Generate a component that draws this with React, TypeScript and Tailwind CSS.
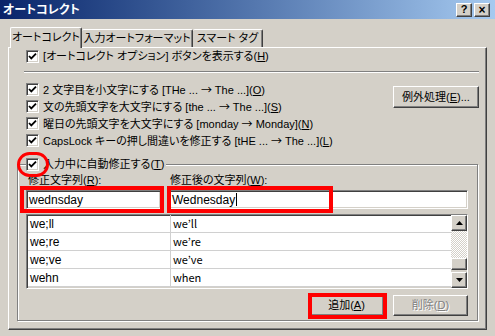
import type { ReactNode } from "react";

function Check() {
  return (
    <span className="flex h-[13px] w-[13px] shrink-0 items-center justify-center border border-t-[#808080] border-l-[#808080] border-r-white border-b-white bg-white shadow-[inset_1px_1px_0_#404040,inset_-1px_-1px_0_#d4d0c8]">
      <svg width="9" height="9" viewBox="0 0 9 9" aria-hidden="true">
        <path d="M1 4 L3.3 6.4 L8 1.6" fill="none" stroke="#000" strokeWidth="1.8" />
      </svg>
    </span>
  );
}

function Key({ k }: { k: string }) {
  return (
    <>
      (<u className="underline-offset-1">{k}</u>)
    </>
  );
}

function Arr() {
  return <span className="font-['Noto_Sans_CJK_JP',sans-serif] [font-feature-settings:normal]">→</span>;
}

function CheckRow({ children }: { children: ReactNode }) {
  return (
    <div className="flex h-[17px] items-center gap-[4px]">
      <Check />
      <span className="whitespace-nowrap">{children}</span>
    </div>
  );
}

function Button({ children, disabled, className }: { children: ReactNode; disabled?: boolean; className: string }) {
  return (
    <div
      className={`flex items-center justify-center whitespace-nowrap border border-t-white border-l-white border-r-[#404040] border-b-[#404040] bg-[#d4d0c8] shadow-[inset_-1px_-1px_0_#808080] ${
        disabled ? "text-[#808080] [text-shadow:1px_1px_0_#fff]" : ""
      } ${className}`}
    >
      {children}
    </div>
  );
}

function Sunken({ children, className }: { children?: ReactNode; className: string }) {
  return (
    <div
      className={`border border-t-[#808080] border-l-[#808080] border-r-white border-b-white bg-white shadow-[inset_1px_1px_0_#404040,inset_-1px_-1px_0_#d4d0c8] ${className}`}
    >
      {children}
    </div>
  );
}

function ScrollArrow({ up }: { up?: boolean }) {
  return (
    <div className="flex h-[16px] w-[16px] items-center justify-center border border-t-white border-l-white border-r-[#404040] border-b-[#404040] bg-[#d4d0c8] shadow-[inset_-1px_-1px_0_#808080]">
      <svg width="7" height="4" viewBox="0 0 7 4" aria-hidden="true">
        <path d={up ? "M3.5 0 L7 4 L0 4 Z" : "M0 0 L7 0 L3.5 4 Z"} fill="#000" />
      </svg>
    </div>
  );
}

const rows = [
  ["we;ll", "we’ll"],
  ["we;re", "we’re"],
  ["we;ve", "we’ve"],
  ["wehn", "when"],
];

export default function App() {
  return (
    <div className="relative flex h-[336px] w-[495px] flex-col overflow-hidden bg-[#d4d0c8] font-['Liberation_Sans','Noto_Sans_CJK_JP',sans-serif] text-[11px] leading-none text-black [font-feature-settings:'palt']">
      {/* title bar */}
      <div className="flex h-[19px] items-center justify-between bg-linear-to-r from-[#0a246a] to-[#a6caf0] pl-[3px] pr-[5px]">
        <span className="text-[12px] font-bold text-white">オートコレクト</span>
        <div className="flex gap-[2px]">
          <Button className="h-[14px] w-[16px] text-[11px] font-bold">?</Button>
          <Button className="h-[14px] w-[16px] text-[12px] font-bold">×</Button>
        </div>
      </div>

      {/* tabs */}
      <div className="relative z-10 mt-[8px] flex h-[20px] items-end whitespace-nowrap pl-[10px]">
        <div className="-mb-px flex h-[21px] w-[72px] items-center justify-center rounded-t-[2px] border-t border-l border-r border-t-white border-l-white border-r-[#404040] bg-[#d4d0c8] pb-[2px] shadow-[inset_-1px_0_0_#808080]">
          オートコレクト
        </div>
        <div className="flex h-[18px] w-[111px] items-center justify-center rounded-t-[2px] border-t border-r border-t-white border-r-[#404040] shadow-[inset_-1px_0_0_#808080]">
          入力オートフォーマット
        </div>
        <div className="flex h-[18px] w-[70px] items-center justify-center rounded-t-[2px] border-t border-r border-t-white border-r-[#404040] shadow-[inset_-1px_0_0_#808080]">
          スマート タグ
        </div>
      </div>

      {/* panel */}
      <div className="ml-[8px] flex h-[283px] w-[479px] flex-col border border-t-white border-l-white border-r-[#404040] border-b-[#404040] shadow-[inset_-1px_-1px_0_#808080]">
        <div className="ml-[17px]">
          <CheckRow>
            [オートコレクト オプション] ボタンを表示する<Key k="H" />
          </CheckRow>
        </div>
        <div className="ml-[15px] mr-[7px] mt-[6px] h-[2px] border-t border-b border-t-[#808080] border-b-white" />

        <div className="mt-[8px] flex justify-between pr-[7px]">
          <div className="ml-[17px] flex flex-col">
            <CheckRow>
              2 文字目を小文字にする [THe ... <Arr /> The ...]<Key k="O" />
            </CheckRow>
            <CheckRow>
              文の先頭文字を大文字にする [the ... <Arr /> The ...]<Key k="S" />
            </CheckRow>
            <CheckRow>
              曜日の先頭文字を大文字にする [monday <Arr /> Monday]<Key k="N" />
            </CheckRow>
            <CheckRow>
              CapsLock キーの押し間違いを修正する [tHE ... <Arr /> The ...]<Key k="L" />
            </CheckRow>
          </div>
          <Button className="mt-[5px] h-[22px] w-[86px]">
            例外処理<Key k="E" />...
          </Button>
        </div>

        <fieldset className="ml-[8px] mt-[7px] w-[461px] border border-[#808080] pb-[4px] pl-[8px] pr-[9px] shadow-[inset_1px_1px_0_#fff,1px_1px_0_#fff]">
          <legend className="flex h-[17px] items-center gap-[4px] bg-[#d4d0c8] pr-[2px]">
            <Check />
            <span>
              入力中に自動修正する<Key k="T" />
            </span>
          </legend>
          <div className="flex h-[14px] items-center">
            <span className="w-[144px] pl-[2px]">
              修正文字列<Key k="R" />:
            </span>
            <span>
              修正後の文字列<Key k="W" />:
            </span>
          </div>
          <div className="mt-[3px] flex gap-[7px] text-[12px]">
            <Sunken className="flex h-[19px] w-[135px] items-center pl-[2px]">wednsday</Sunken>
            <Sunken className="flex h-[19px] w-[300px] items-center pl-[3px]">
              Wednesday<span className="ml-px h-[13px] w-px bg-black" />
            </Sunken>
          </div>
          <Sunken className="mt-[5px] flex h-[75px] w-[442px] overflow-hidden text-[12px]">
            <div className="flex flex-1 flex-col pl-px">
              {rows.map(([a, b]) => (
                <div key={a} className="flex h-[18px] shrink-0 border-b border-[#d0d0d0]">
                  <div className="flex w-[143px] items-center border-r border-[#d0d0d0] pl-[2px]">{a}</div>
                  <div className="flex items-center pl-[2px] font-['Noto_Sans_CJK_JP',sans-serif] text-[11px] [font-feature-settings:normal]">
                    {b}
                  </div>
                </div>
              ))}
            </div>
            <div className="flex w-[16px] flex-col">
              <ScrollArrow up />
              <div className="flex-1 bg-[repeating-conic-gradient(#d4d0c8_0_25%,#fff_0_50%)] bg-size-[2px_2px]" />
              <div className="h-[12px] border border-t-white border-l-white border-r-[#404040] border-b-[#404040] bg-[#d4d0c8] shadow-[inset_-1px_-1px_0_#808080]" />
              <div className="h-[2px] bg-[#d4d0c8]" />
              <ScrollArrow />
            </div>
          </Sunken>
          <div className="mt-[6px] flex justify-end gap-[9px]">
            <Button className="h-[21px] w-[75px]">
              追加<Key k="A" />
            </Button>
            <Button disabled className="h-[21px] w-[75px]">
              削除<Key k="D" />
            </Button>
          </div>
        </fieldset>
      </div>

      {/* red annotation marks */}
      <div className="absolute left-[17px] top-[152px] h-[25px] w-[32px] rounded-full border-[3px] border-[#ff0000]" />
      <div className="absolute left-[20px] top-[186px] h-[27px] w-[144px] border-4 border-[#ff0000]" />
      <div className="absolute left-[167px] top-[186px] h-[27px] w-[166px] border-4 border-[#ff0000]" />
      <div className="absolute left-[308px] top-[293px] h-[26px] w-[79px] border-4 border-[#ff0000]" />
    </div>
  );
}
